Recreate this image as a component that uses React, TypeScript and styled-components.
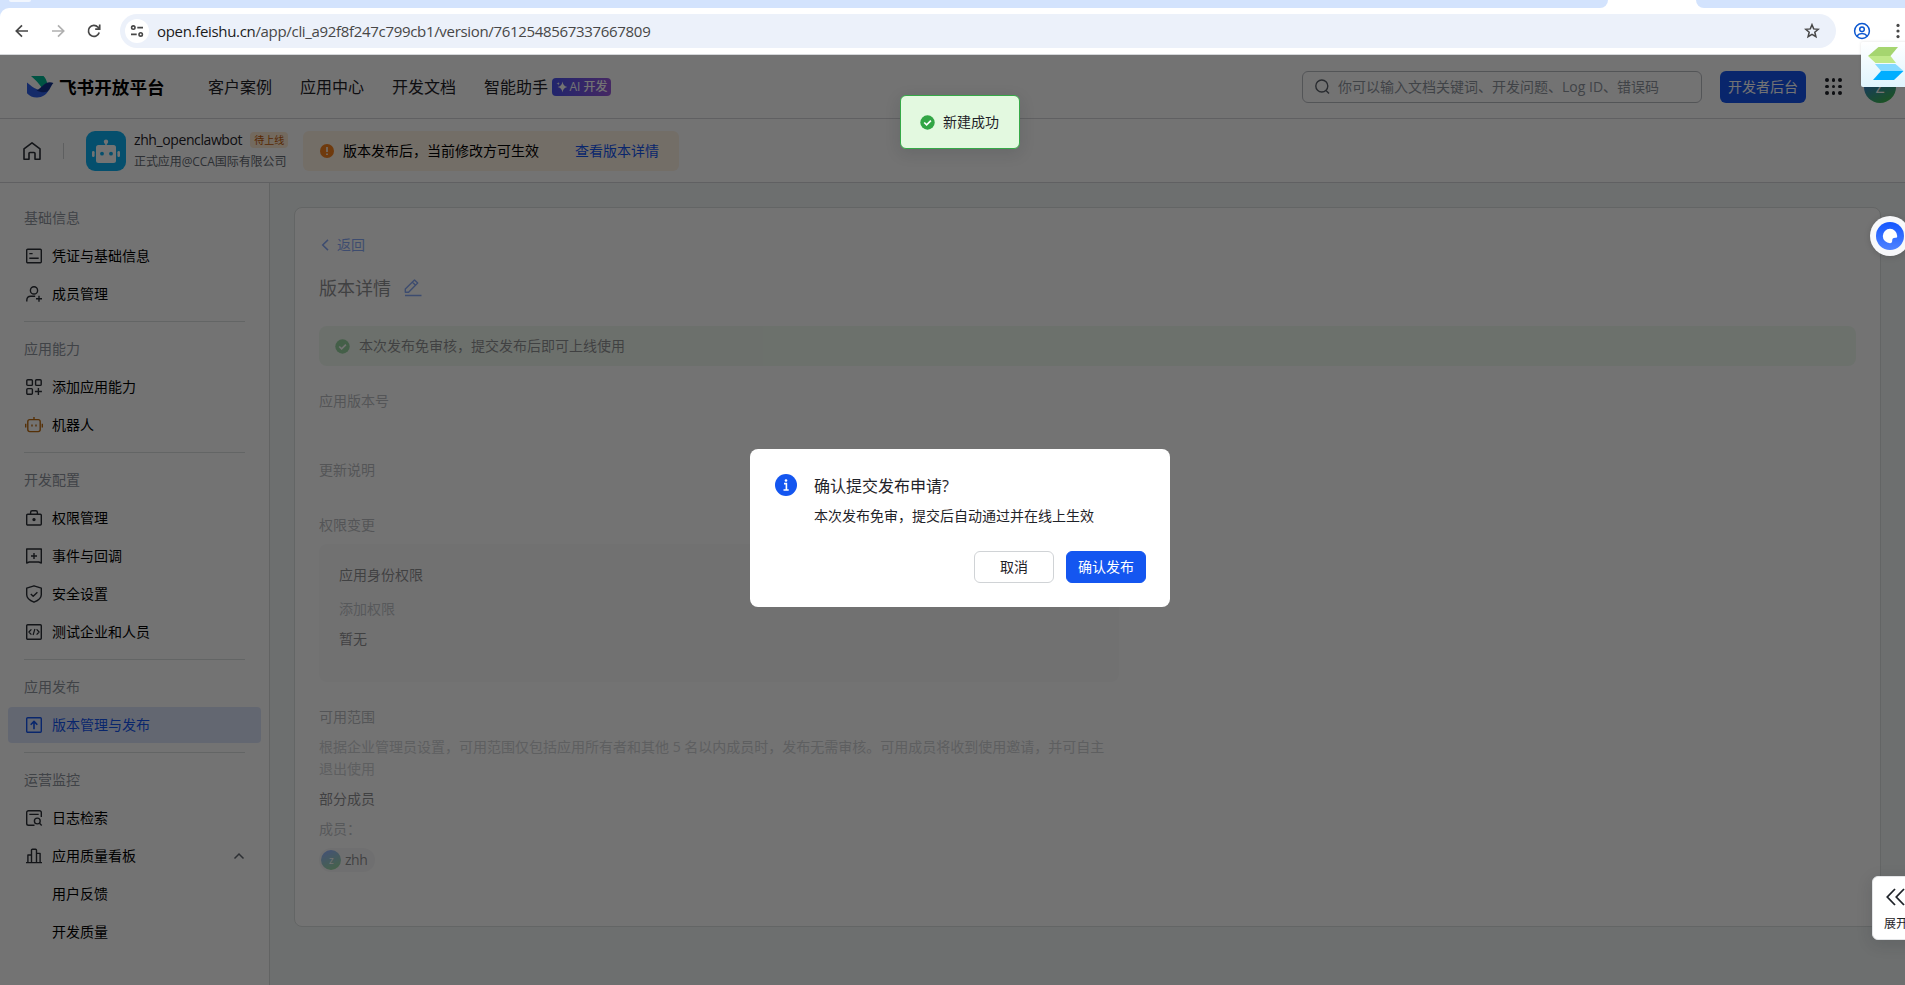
import React from 'react';
import styled, { createGlobalStyle } from 'styled-components';

const GlobalStyle = createGlobalStyle`
  * { box-sizing: border-box; }
  html, body { margin: 0; padding: 0; overflow: hidden; }
  body {
    font-family: "Open Sans", "Noto Sans CJK SC", sans-serif;
    font-size: 14px;
    line-height: 22px;
    color: #1f2329;
    background: #fff;
  }
  svg { display: block; flex: none; }
`;

/* ---------- browser chrome ---------- */

const Window = styled.div`
  width: 100%;
  height: 985px;
  display: flex;
  flex-direction: column;
  overflow: hidden;
`;

const TabStrip = styled.div`
  display: flex;
  height: 8px;
  background: #fff;
`;

const StripLeft = styled.div`
  width: 1608px;
  background: #d3e3fd;
  border-bottom-right-radius: 9px;
  padding-left: 9px;
`;

const StripPill = styled.div`
  width: 22px;
  height: 2px;
  background: #f1f6fe;
  border-radius: 0 0 6px 6px;
`;

const StripRight = styled.div`
  flex: 1;
  margin-left: 88px;
  background: #d3e3fd;
  border-bottom-left-radius: 9px;
`;

const ToolbarBack = styled.div`
  background: #d3e3fd;
`;

const Toolbar = styled.div`
  height: 47px;
  display: flex;
  align-items: center;
  padding: 0 0 0 14px;
  background: #fff;
  border-top-left-radius: 9px;
  border-bottom: 1px solid #d5d7da;
`;

const NavIcons = styled.div`
  display: flex;
  gap: 20px;
  width: 106px;
`;

const Omnibox = styled.div`
  width: 1716px;
  height: 34px;
  border-radius: 17px;
  background: #ecf1fa;
  display: flex;
  align-items: center;
  padding: 0 16px 0 5px;
`;

const SiteInfo = styled.div`
  width: 24px;
  height: 24px;
  border-radius: 12px;
  background: #fff;
  display: flex;
  align-items: center;
  justify-content: center;
`;

const Url = styled.div`
  flex: 1;
  padding-left: 8px;
  font-size: 15px;
  letter-spacing: -0.32px;
  color: #474747;
  white-space: nowrap;
  b { font-weight: 400; color: #1c1c1c; }
`;

const ToolbarEnd = styled.div`
  display: flex;
  align-items: center;
  gap: 21px;
  margin-left: 17px;
`;

/* ---------- page ---------- */

const Page = styled.div`
  position: relative;
  flex: 1;
  display: flex;
  flex-direction: column;
  min-height: 0;
  overflow: hidden;
  background: #fff;
`;

const Header = styled.header`
  height: 64px;
  flex: none;
  display: flex;
  align-items: center;
  padding: 0 9px 0 26px;
  border-bottom: 1px solid #d4d6d9;
`;

const Brand = styled.div`
  width: 139px;
  margin-left: 5px;
  font-size: 17.6px;
  font-weight: 700;
  color: #000;
  white-space: nowrap;
`;

const NavList = styled.nav`
  display: flex;
  margin-left: 10px;
  gap: 28px;
  flex: 1;
  font-size: 16px;
  white-space: nowrap;
`;

const NavItem = styled.div`
  display: flex;
  align-items: center;
  gap: 4px;
`;

const AiBadge = styled.span`
  height: 18px;
  width: 59px;
  display: flex;
  align-items: center;
  justify-content: center;
  gap: 2px;
  border-radius: 4px;
  background: linear-gradient(90deg, #4a52f0, #9a5bdc);
  color: #fff;
  font-size: 12px;
  font-weight: 500;
  line-height: 18px;
`;

const SearchBox = styled.div`
  width: 400px;
  height: 32px;
  border: 1px solid #b9bcc2;
  border-radius: 6px;
  display: flex;
  align-items: center;
  gap: 8px;
  padding-left: 12px;
  color: #8f959e;
  white-space: nowrap;
`;

const ConsoleButton = styled.div`
  width: 86px;
  height: 32px;
  margin: 0 19px 0 18px;
  border-radius: 6px;
  background: #1456f0;
  color: #fff;
  display: flex;
  align-items: center;
  justify-content: center;
`;

const DotGrid = styled.div`
  display: grid;
  grid-template-columns: repeat(3, 3.6px);
  gap: 3px;
  width: 18px;
  margin-right: 21px;
  i { width: 3.6px; height: 3.6px; border-radius: 2px; background: #1f2329; }
`;

const Avatar = styled.div<{ $size: number }>`
  width: ${p => p.$size}px;
  height: ${p => p.$size}px;
  border-radius: 50%;
  background: linear-gradient(155deg, #3370ff 10%, #3cb456 85%);
  color: #fff;
  font-size: ${p => p.$size * 0.5}px;
  display: flex;
  align-items: center;
  justify-content: center;
  line-height: 1;
`;

const SubHeader = styled.div`
  height: 64px;
  flex: none;
  display: flex;
  align-items: center;
  padding-left: 22px;
  border-bottom: 1px solid #d4d6d9;
`;

const VLine = styled.div`
  width: 1px;
  height: 16px;
  background: #d0d3d6;
  margin: 0 22px 0 21px;
`;

const AppMeta = styled.div`
  width: 160px;
  margin-left: 8px;
  padding-top: 1px;
  white-space: nowrap;
`;

const AppName = styled.div`
  display: flex;
  align-items: center;
  gap: 8px;
  height: 20px;
  letter-spacing: -0.4px;
`;

const StatusTag = styled.span`
  height: 16px;
  padding: 0 4px;
  border-radius: 4px;
  background: #feead2;
  color: #c25705;
  font-size: 10px;
  line-height: 16px;
  letter-spacing: 0;
`;

const AppDesc = styled.div`
  font-size: 12px;
  line-height: 20px;
  height: 22px;
  padding-top: 2px;
  letter-spacing: -0.08px;
  color: #646a73;
`;

const Notice = styled.div`
  width: 376px;
  height: 40px;
  margin-left: 9px;
  padding: 0 20px 0 17px;
  border-radius: 6px;
  background: #fff3e5;
  display: flex;
  align-items: center;
  white-space: nowrap;
`;

const NoticeText = styled.div`
  flex: 1;
  padding-left: 9px;
  color: #000;
`;

const Link = styled.a`
  color: #1456f0;
`;

const Body = styled.div`
  flex: 1;
  display: flex;
  min-height: 0;
`;

const Sidebar = styled.aside`
  width: 270px;
  flex: none;
  padding: 16px 0 0 8px;
  border-right: 1px solid #d9dcdc;
`;

const SectionTitle = styled.div`
  height: 39px;
  padding: 8px 0 0 16px;
  color: #8f959e;
`;

const MenuItem = styled.div<{ $active?: boolean }>`
  width: 253px;
  height: 36px;
  margin-bottom: 2px;
  padding: 0 16px 0 18px;
  border-radius: 4px;
  display: flex;
  align-items: center;
  color: ${p => (p.$active ? '#1456f0' : '#000')};
  background: ${p => (p.$active ? '#dce5fb' : 'transparent')};
`;

const MenuIcon = styled.span<{ $tone?: string }>`
  width: 26px;
  color: ${p => p.$tone ?? '#2b2f36'};
`;

const MenuLabel = styled.span`
  flex: 1;
`;

const Rule = styled.div`
  width: 221px;
  height: 1px;
  margin: 9px 0 8px 16px;
  background: #dcdfdf;
`;

const Main = styled.main`
  flex: 1;
  padding: 24px 24px 0;
  background: #f2f6f5;
`;

const Card = styled.section`
  height: 720px;
  border: 1px solid #dbdfdf;
  border-radius: 8px;
  background: #fff;
`;

const CardBody = styled.div`
  height: 100%;
  padding: 26px 24px 0;
  opacity: 0.5;
`;

const BackLink = styled.div`
  display: flex;
  align-items: center;
  gap: 7px;
  color: #1456f0;
`;

const Title = styled.h1`
  display: flex;
  align-items: center;
  gap: 13px;
  margin: 18px 0 0;
  font-size: 18px;
  line-height: 28px;
  height: 28px;
  font-weight: 400;
`;

const SuccessBar = styled.div`
  height: 40px;
  margin-top: 24px;
  padding: 0 16px;
  display: flex;
  align-items: center;
  gap: 9px;
  border-radius: 8px;
  background: #e0f5e1;
`;

const FieldLabel = styled.div<{ $top: number }>`
  margin-top: ${p => p.$top}px;
  line-height: 22px;
  color: #777d86;
`;

const ScopeBox = styled.div`
  width: 800px;
  height: 138px;
  margin-top: 8px;
  padding: 20px;
  border-radius: 8px;
  background: #f7f8f9;
`;

const Line = styled.div<{ $top?: number; $muted?: boolean }>`
  margin-top: ${p => p.$top ?? 0}px;
  line-height: 22px;
  color: ${p => (p.$muted ? '#868c95' : '#1f2329')};
`;

const Hint = styled.p`
  width: 800px;
  margin: 8px 0 0;
  line-height: 22px;
  color: #a2a7ae;
  white-space: nowrap;
`;

const MemberChip = styled.div`
  width: 56px;
  height: 24px;
  margin-top: 8px;
  padding-left: 2px;
  display: flex;
  align-items: center;
  gap: 4px;
  border-radius: 12px;
  background: #f0f1f2;
  letter-spacing: -0.5px;
`;

/* ---------- layers above the page ---------- */

const Mask = styled.div`
  position: absolute;
  inset: 0;
  background: rgba(0, 0, 0, 0.55);
`;

const Toast = styled.div`
  position: absolute;
  left: 900px;
  top: 40px;
  width: 120px;
  height: 54px;
  border: 1px solid #35a947;
  border-radius: 6px;
  background: #e3f9e0;
  box-shadow: 0 4px 16px rgba(31, 35, 41, 0.14);
  display: flex;
  align-items: center;
  padding-left: 19px;
  gap: 8px;
  white-space: nowrap;
`;

const Dialog = styled.div`
  position: absolute;
  left: 750px;
  top: 394px;
  width: 420px;
  height: 158px;
  padding: 25px 24px 24px 25px;
  border-radius: 8px;
  background: #fff;
  display: flex;
  gap: 17px;
`;

const DialogContent = styled.div`
  flex: 1;
  display: flex;
  flex-direction: column;
`;

const DialogTitle = styled.div`
  font-size: 16px;
  line-height: 24px;
  height: 24px;
`;

const DialogText = styled.div`
  margin-top: 7px;
  white-space: nowrap;
`;

const DialogActions = styled.div`
  display: flex;
  justify-content: flex-end;
  gap: 12px;
  margin-top: 24px;
`;

const DialogButton = styled.div<{ $primary?: boolean }>`
  width: 80px;
  height: 32px;
  border-radius: 6px;
  border: 1px solid ${p => (p.$primary ? '#1456f0' : '#d0d3d6')};
  background: ${p => (p.$primary ? '#1456f0' : '#fff')};
  color: ${p => (p.$primary ? '#fff' : '#1f2329')};
  display: flex;
  align-items: center;
  justify-content: center;
`;

const ExtensionTile = styled.div`
  position: absolute;
  left: 1861px;
  top: 42px;
  width: 48px;
  height: 45px;
  border-radius: 2px;
  background: linear-gradient(180deg, #fff, #dff4fd);
  box-shadow: 0 0 3px rgba(0, 0, 0, 0.12);
  padding: 5px 0 0 7px;
`;

const AssistantBubble = styled.div`
  position: absolute;
  left: 1870px;
  top: 161px;
  width: 40px;
  height: 40px;
  border-radius: 20px;
  background: #f7f8fa;
  box-shadow: 0 1px 6px rgba(0, 0, 0, 0.15);
  padding: 6px;
`;

const ExpandTab = styled.div`
  position: absolute;
  left: 1872px;
  top: 821px;
  width: 48px;
  height: 64px;
  border: 1px solid #e3e5e7;
  border-radius: 6px;
  background: #fff;
  box-shadow: 0 4px 16px rgba(31, 35, 41, 0.16);
  padding: 11px 0 0 11px;
  font-size: 12px;
  line-height: 18px;
  white-space: nowrap;
  svg { margin: 0 0 9px 2px; }
`;

/* ---------- icons ---------- */

const Glyph = ({ size = 16, w = 1.4, children }: { size?: number; w?: number; children: React.ReactNode }) => (
  <svg width={size} height={size} viewBox="0 0 16 16" fill="none" stroke="currentColor" strokeWidth={w} strokeLinejoin="round" overflow="visible">
    {children}
  </svg>
);

const icons: Record<string, React.ReactNode> = {
  info: <><rect x=".7" y="1.2" width="14.6" height="13.6" rx="1" /><path d="M3.3 5.6h3.3M3.3 10.2h9.4" /></>,
  member: <><circle cx="8" cy="4.4" r="3.6" /><path d="M.8 15.5v-1.2c0-2.4 1.8-4 4-4h4.4M13 9.8v6M10 12.8h6" /></>,
  addApp: <><rect x=".8" y=".8" width="5.6" height="5.6" rx="1" /><rect x="9.6" y=".8" width="5.6" height="5.6" rx="1" /><rect x=".8" y="9.6" width="5.6" height="5.6" rx="1" /><path d="M12.4 9v7M8.9 12.5h7" /></>,
  bot: <><rect x="1.8" y="2.6" width="12.4" height="12" rx="2" /><path d="M8 2.600V0M6 7.600v2M10 7.600v2M-.3 6.800v3.600M16.300 6.800v3.600" /></>,
  lock: <><rect x=".7" y="4.2" width="14.6" height="10.8" rx="1" /><path d="M4.6 4V2.4C4.6 1.400 5.300.8 6.200.8h3.600c.9 0 1.600.6 1.600 1.600V4" /><circle cx="8" cy="9.600" r="1" fill="currentColor" /></>,
  event: <><path d="M.7 1h14.600v14l-2.600-1H3.300l-2.600 1z" /><path d="M8 5v6M5 8h6" /></>,
  shield: <><path d="M8 -.2 15.300 2.100v6.600c0 3.700-3.500 5.900-7.300 7.500C4.200 14.600.7 12.400.7 8.700V2.100z" /><path d="m4.800 8 2.400 2.300 4.200-4" /></>,
  code: <><rect x=".7" y=".7" width="14.600" height="14.600" rx="1" /><path d="M5.400 5.300 2.900 8l2.500 2.700M10.600 5.300 13.100 8l-2.500 2.700M8.900 5 7.100 11" strokeWidth="1.200" /></>,
  publish: <><rect x=".7" y=".7" width="14.600" height="14.600" rx="1" /><path d="M8 12.200V4.600M4.700 7.700 8 4.400l3.300 3.300" strokeWidth="1.600" /></>,
  log: <><path d="M15.300 7V2.500C15.300 1.500 14.500.7 13.500.7h-11C1.500.7.7 1.500.7 2.500v11c0 1 .8 1.800 1.800 1.800h6M3.300 4.400h9.400" /><circle cx="11.300" cy="11" r="2.900" /><path d="m13.500 13.300 2.200 2.200" /></>,
  chart: <><path d="M0 14.600h16M1.900 14.400V7h3.600M5.500 14.400V2.200c0-.6.300-.9.900-.9h3.200c.6 0 .9.300.9.900v12.200M10.500 5.400h3.600v9" /></>,
};

const Icon = ({ name }: { name: string }) => <Glyph>{icons[name]}</Glyph>;

const CheckBadge = () => (
  <svg width="15" height="15" viewBox="0 0 15 15">
    <circle cx="7.5" cy="7.500" r="7.200" fill="#32a645" />
    <path d="m4.200 7.500 2.400 2.300 4.300-4.200" fill="none" stroke="#fff" strokeWidth="1.700" />
  </svg>
);

interface Entry { icon: string; label: string; tone?: string; active?: boolean; open?: boolean }
const sections: { title: string; items: Entry[] }[] = [
  { title: '基础信息', items: [{ icon: 'info', label: '凭证与基础信息' }, { icon: 'member', label: '成员管理' }] },
  { title: '应用能力', items: [{ icon: 'addApp', label: '添加应用能力' }, { icon: 'bot', label: '机器人', tone: '#bd6b10' }] },
  {
    title: '开发配置',
    items: [
      { icon: 'lock', label: '权限管理' },
      { icon: 'event', label: '事件与回调' },
      { icon: 'shield', label: '安全设置' },
      { icon: 'code', label: '测试企业和人员' },
    ],
  },
  { title: '应用发布', items: [{ icon: 'publish', label: '版本管理与发布', tone: '#1456f0', active: true }] },
  {
    title: '运营监控',
    items: [
      { icon: 'log', label: '日志检索' },
      { icon: 'chart', label: '应用质量看板', open: true },
      { icon: '', label: '用户反馈' },
      { icon: '', label: '开发质量' },
    ],
  },
];

const BrowserBar = () => (
  <>
    <TabStrip>
      <StripLeft><StripPill /></StripLeft>
      <StripRight />
    </TabStrip>
    <ToolbarBack>
      <Toolbar>
        <NavIcons>
          <svg width="16" height="16" viewBox="0 0 16 16" fill="none" stroke="#474747" strokeWidth="1.700"><path d="M14 8H2.500M8 2.300 2.300 8 8 13.700" /></svg>
          <svg width="16" height="16" viewBox="0 0 16 16" fill="none" stroke="#b0b0b0" strokeWidth="1.700"><path d="M2 8h11.500M8 2.300 13.700 8 8 13.700" /></svg>
          <svg width="16" height="16" viewBox="0 0 16 16" fill="none" stroke="#474747" strokeWidth="1.700"><path d="M13.200 9.500A5.500 5.500 0 1 1 12 4.200l1.600 1.500M13.700 1.500v4.600H9.200" /></svg>
        </NavIcons>
        <Omnibox>
          <SiteInfo>
            <svg width="14" height="14" viewBox="0 0 14 14" fill="none" stroke="#474747" strokeWidth="1.600"><circle cx="3.300" cy="3.600" r="1.700" /><path d="M7.300 3.600H13M1 10.400h5.700" /><circle cx="10.700" cy="10.400" r="1.700" /></svg>
          </SiteInfo>
          <Url><b>open.feishu.cn</b>/app/cli_a92f8f247c799cb1/version/7612548567337667809</Url>
          <svg width="16" height="16" viewBox="0 0 16 16" fill="none" stroke="#474747" strokeWidth="1.500"><path d="m8 1.700 1.700 4.200 4.600.4-3.500 2.900 1.100 4.500L8 11.300l-3.900 2.400 1.100-4.500-3.500-2.900 4.600-.4z" /></svg>
        </Omnibox>
        <ToolbarEnd>
          <svg width="18" height="18" viewBox="0 0 18 18" fill="none" stroke="#0b57d0" strokeWidth="1.500"><circle cx="9" cy="9" r="7.400" /><circle cx="9" cy="7.200" r="2.300" /><path d="M3.900 14c1.300-1.700 3-2.400 5.100-2.400s3.800.7 5.100 2.400" /></svg>
          <svg width="12" height="16" viewBox="0 0 12 16" fill="#474747"><circle cx="6" cy="2.400" r="1.600" /><circle cx="6" cy="8" r="1.600" /><circle cx="6" cy="13.600" r="1.600" /></svg>
        </ToolbarEnd>
      </Toolbar>
    </ToolbarBack>
  </>
);

const PageHeader = () => (
  <Header>
    <svg width="28" height="24" viewBox="0 0 28 24">
      <path d="M5 1h12.500c1.800 1.800 3.200 4.400 3.700 7.300-2 1-3.700 2.500-5.500 4.100C12.800 8.700 9.200 4.400 5 1z" fill="#00b894" />
      <path d="M1 7.500v10.800c2.600 3 6.400 4.400 10.300 4.200 5-.2 9-2.700 11.500-7.500-4 3-12.500.8-21.800-7.500z" fill="#2f5fe8" />
      <path d="M10.500 15.200c3.500-1 6-5.200 9.500-7 2.400-1.200 5.200-1.100 7.400-.2-1.700 1.700-2.800 4.500-4.100 6.800-2.400 3.200-7.800 3.400-12.800.4z" fill="#12328f" />
    </svg>
    <Brand>飞书开放平台</Brand>
    <NavList>
      <NavItem>客户案例</NavItem>
      <NavItem>应用中心</NavItem>
      <NavItem>开发文档</NavItem>
      <NavItem>
        智能助手
        <AiBadge>
          <svg width="12" height="12" viewBox="0 0 12 12" fill="#fff"><path d="M6.500.5c.5 3 1.500 4.500 4.800 5.500-3.300 1-4.300 2.500-4.800 5.500C6 8.500 5 7 1.700 6 5 5 6 3.500 6.500.5zM2.200 1l.4 1.300 1.300.4-1.300.4-.4 1.300-.4-1.300-1.300-.4 1.300-.4z" /></svg>
          AI 开发
        </AiBadge>
      </NavItem>
    </NavList>
    <SearchBox>
      <svg width="15" height="16" viewBox="0 0 15 16" fill="none" stroke="#5b616a" strokeWidth="1.400"><circle cx="6.800" cy="7" r="6" /><path d="m11 11.500 3 3" /></svg>
      <span>你可以输入文档关键词、开发问题、Log ID、错误码</span>
    </SearchBox>
    <ConsoleButton>开发者后台</ConsoleButton>
    <DotGrid>{Array.from({ length: 9 }, (_, i) => <i key={i} />)}</DotGrid>
    <Avatar $size={32}>Z</Avatar>
  </Header>
);

const AppHeader = () => (
  <SubHeader>
    <svg width="20" height="20" viewBox="0 0 20 20" fill="none" stroke="#2b2f36" strokeWidth="1.600" strokeLinejoin="round"><path d="M2 7.800 10 1.800l8 6v10.400h-5V12.500c0-.6-.4-1-1-1H8c-.6 0-1 .4-1 1v5.700H2z" /></svg>
    <VLine />
    <svg width="40" height="40" viewBox="0 0 40 40">
      <rect width="40" height="40" rx="9" fill="#0cb0f2" />
      <circle cx="20" cy="10.800" r="2.200" fill="#fff" />
      <path d="M19.200 12h1.600v4h-1.600z" fill="#fff" />
      <rect x="10" y="14" width="20" height="18" rx="2.500" fill="#fff" />
      <rect x="6" y="20" width="2.600" height="6" rx="1.300" fill="#fff" />
      <rect x="31.400" y="20" width="2.600" height="6" rx="1.300" fill="#fff" />
      <circle cx="16" cy="22.700" r="1.900" fill="#0cb0f2" />
      <circle cx="25" cy="22.700" r="1.900" fill="#0cb0f2" />
    </svg>
    <AppMeta>
      <AppName>zhh_openclawbot<StatusTag>待上线</StatusTag></AppName>
      <AppDesc>正式应用@CCA国际有限公司</AppDesc>
    </AppMeta>
    <Notice>
      <svg width="14" height="14" viewBox="0 0 14 14"><circle cx="7" cy="7" r="7" fill="#f5811e" /><path d="M7 3v5M7 9.400v1.700" stroke="#fff" strokeWidth="1.500" /></svg>
      <NoticeText>版本发布后，当前修改方可生效</NoticeText>
      <Link>查看版本详情</Link>
    </Notice>
  </SubHeader>
);

const SideMenu = () => (
  <Sidebar>
    {sections.map((s, i) => (
      <React.Fragment key={s.title}>
        {i > 0 && <Rule />}
        <SectionTitle>{s.title}</SectionTitle>
        {s.items.map(it => (
          <MenuItem key={it.label} $active={it.active}>
            <MenuIcon $tone={it.tone}>{it.icon && <Icon name={it.icon} />}</MenuIcon>
            <MenuLabel>{it.label}</MenuLabel>
            {it.open && <svg width="12" height="12" viewBox="0 0 12 12" fill="none" stroke="#646a73" strokeWidth="1.500"><path d="m1.500 8.500 4.500-4.500 4.500 4.500" /></svg>}
          </MenuItem>
        ))}
      </React.Fragment>
    ))}
  </Sidebar>
);

const VersionDetail = () => (
  <Card>
    <CardBody>
      <BackLink>
        <svg width="11" height="12" viewBox="0 0 11 12" fill="none" stroke="currentColor" strokeWidth="1.500"><path d="M9 .9 3.700 6 9 11.100" /></svg>
        返回
      </BackLink>
      <Title>
        版本详情
        <svg width="18" height="18" viewBox="0 0 18 18" fill="none" stroke="#1456f0" strokeWidth="1.400" strokeLinejoin="round"><path d="M1.300 13.200V10L10.500.9l3.200 3.200-9.100 9.100zM8.300 3.100l3.200 3.200M1 16.500h16.500" /></svg>
      </Title>
      <SuccessBar><CheckBadge />本次发布免审核，提交发布后即可上线使用</SuccessBar>
      <FieldLabel $top={24}>应用版本号</FieldLabel>
      <FieldLabel $top={47}>更新说明</FieldLabel>
      <FieldLabel $top={33}>权限变更</FieldLabel>
      <ScopeBox>
        <Line>应用身份权限</Line>
        <Line $top={12} $muted>添加权限</Line>
        <Line $top={8}>暂无</Line>
      </ScopeBox>
      <FieldLabel $top={24}>可用范围</FieldLabel>
      <Hint>
        根据企业管理员设置，可用范围仅包括应用所有者和其他 5 名以内成员时，发布无需审核。可用成员将收到使用邀请，并可自主
        <br />
        退出使用
      </Hint>
      <Line $top={8}>部分成员</Line>
      <Line $top={8} $muted>成员：</Line>
      <MemberChip><Avatar $size={20}>z</Avatar>zhh</MemberChip>
    </CardBody>
  </Card>
);

const ConfirmDialog = () => (
  <Dialog>
    <svg width="22" height="22" viewBox="0 0 22 22">
      <circle cx="11" cy="11" r="11" fill="#1456f0" />
      <circle cx="11" cy="6.500" r="1.300" fill="#fff" />
      <path d="M9 9.600h2.400V16M8.500 16h5.200" stroke="#fff" strokeWidth="1.600" fill="none" />
    </svg>
    <DialogContent>
      <DialogTitle>确认提交发布申请?</DialogTitle>
      <DialogText>本次发布免审，提交后自动通过并在线上生效</DialogText>
      <DialogActions>
        <DialogButton>取消</DialogButton>
        <DialogButton $primary>确认发布</DialogButton>
      </DialogActions>
    </DialogContent>
  </Dialog>
);

export default function App() {
  return (
    <Window>
      <GlobalStyle />
      <BrowserBar />
      <Page>
        <PageHeader />
        <AppHeader />
        <Body>
          <SideMenu />
          <Main><VersionDetail /></Main>
        </Body>
        <Mask />
        <Toast><CheckBadge />新建成功</Toast>
        <ConfirmDialog />
        <AssistantBubble>
          <svg width="28" height="28" viewBox="0 0 28 28">
            <defs><linearGradient id="ring" x1="0" y1="0" x2="0" y2="1"><stop offset="0" stopColor="#1456ff" /><stop offset="1" stopColor="#4f83ff" /></linearGradient></defs>
            <circle cx="14" cy="14" r="14" fill="url(#ring)" />
            <path d="M14 6.800a7.200 7.200 0 0 1 7.200 7.200c0 1.500-.5 1.800-1.800 1.800-2.600 0-3.200 1-3.200 3 0 1.700-.6 2.400-2.200 2.400a7.200 7.200 0 0 1 0-14.400z" fill="#fff" />
          </svg>
        </AssistantBubble>
        <ExpandTab>
          <svg width="20" height="18" viewBox="0 0 20 18" fill="none" stroke="#1f2329" strokeWidth="1.800"><path d="M9 1 1.300 9 9 17M18 1l-7.700 8 7.700 8" /></svg>
          展开
        </ExpandTab>
      </Page>
      <ExtensionTile>
        <svg width="36" height="34" viewBox="0 0 36 34">
          <path d="M10.500 0H30l-7.500 9H0z" fill="#a5d56f" />
          <path d="M0 9h22.500l5.500 7H7.500z" fill="#bfe889" />
          <path d="M7 17h20.500l8 7H13z" fill="#86daff" />
          <path d="M13 24h22.500L26 33H5z" fill="#00aeff" />
        </svg>
      </ExtensionTile>
    </Window>
  );
}
